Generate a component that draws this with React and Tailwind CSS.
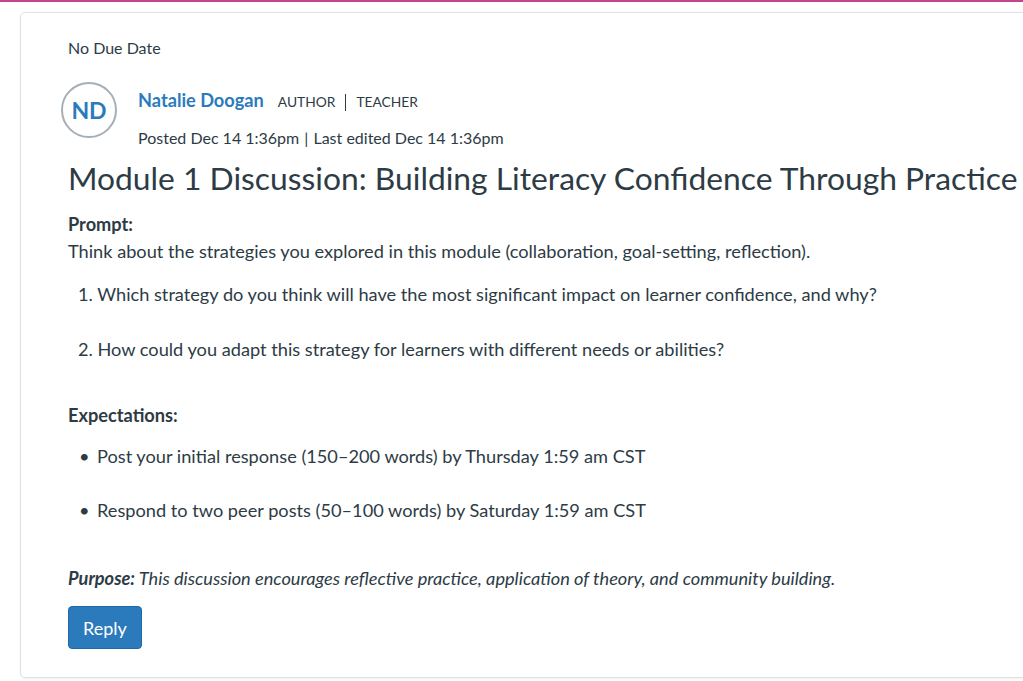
export default function App() {
  return (
    <div className="w-[1023px] h-[681px] overflow-hidden bg-white text-[#2d3b45]" style={{ fontFamily: "Lato, 'Noto Sans', sans-serif" }}>
      <div className="h-[2px] bg-[#c4458f]" />
      <div className="ml-[20px] mt-[10px] w-[1040px] h-[666px] border border-[#dfe2e4] rounded-[5px] shadow-[0_1px_2px_rgba(0,0,0,0.06)] pl-[47px] pt-[25px]">
        <div className="text-[16px] leading-[20px]">No Due Date</div>
        <div className="flex items-start mt-[24px]">
          <div className="w-[56px] h-[56px] rounded-full border-2 border-[#a5afb5] flex items-center justify-center text-[#2b7abc] font-bold text-[23px] -ml-[7px] shrink-0">ND</div>
          <div className="ml-[21px]">
            <div className="flex items-center mt-[6px] h-[24px]">
              <span className="text-[18.2px] font-bold text-[#2b7abc] leading-[24px]">Natalie Doogan</span>
              <span className="ml-[14px] mt-[5px] text-[13.8px]">AUTHOR</span>
              <span className="mx-[10px] mt-[5px] w-[1px] h-[17px] bg-[#2d3b45]" />
              <span className="mt-[5px] text-[13.8px]">TEACHER</span>
            </div>
            <div className="mt-[16px] text-[16px] leading-[20px]">Posted Dec 14 1:36pm <span className="mx-[1px]">|</span> Last edited Dec 14 1:36pm</div>
          </div>
        </div>
        <h1 className="mt-[10px] text-[31.8px] leading-[40px] font-normal whitespace-nowrap">Module 1 Discussion: Building Literacy Confidence Through Practice</h1>
        <div className="text-[18.2px] leading-[27px]">
          <p className="mt-[13px] font-bold">Prompt:</p>
          <p>Think about the strategies you explored in this module (collaboration, goal-setting, reflection).</p>
          <ol className="mt-[16px] ml-[10px]">
            <li>1. Which strategy do you think will have the most significant impact on learner confidence, and why?</li>
            <li className="mt-[28px]">2. How could you adapt this strategy for learners with different needs or abilities?</li>
          </ol>
          <p className="mt-[39px] font-bold">Expectations:</p>
          <ul className="mt-[14px] ml-[11px]">
            <li className="flex"><span className="w-[18px]">•</span>Post your initial response (150–200 words) by Thursday 1:59 am CST</li>
            <li className="flex mt-[27px]"><span className="w-[18px]">•</span>Respond to two peer posts (50–100 words) by Saturday 1:59 am CST</li>
          </ul>
          <p className="mt-[41px] italic"><span className="font-bold">Purpose:</span> This discussion encourages reflective practice, application of theory, and community building.</p>
        </div>
        <button className="mt-[14px] h-[43px] px-[14px] rounded-[4px] bg-[#2b7abc] border border-[#1e6aa8] text-white text-[18px] leading-none">Reply</button>
      </div>
    </div>
  );
}
